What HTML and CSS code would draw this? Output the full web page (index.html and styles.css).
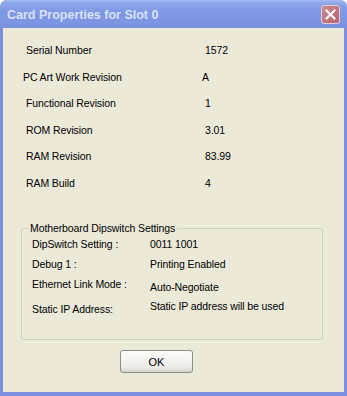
FILE: index.html
```html
<!DOCTYPE html>
<html lang="en">
<head>
    <meta charset="UTF-8">
    <title>Card Properties for Slot 0</title>
    <link rel="stylesheet" href="styles.css">
</head>
<body>
    <div class="window">
        <div class="titlebar">
            <span class="title">Card Properties for Slot 0</span>
            <button class="close" aria-label="Close">
                <svg width="11" height="11" viewBox="0 0 11 11">
                    <path d="M1.5 1.5 L9.5 9.5 M9.5 1.5 L1.5 9.5" stroke="#fff" stroke-width="2" stroke-linecap="square"/>
                </svg>
            </button>
        </div>

        <div class="content">
            <div class="props">
                <div class="prop"><span class="label">Serial Number</span><span class="value">1572</span></div>
                <div class="prop shift"><span class="label">PC Art Work Revision</span><span class="value">A</span></div>
                <div class="prop"><span class="label">Functional Revision</span><span class="value">1</span></div>
                <div class="prop"><span class="label">ROM Revision</span><span class="value">3.01</span></div>
                <div class="prop"><span class="label">RAM Revision</span><span class="value">83.99</span></div>
                <div class="prop"><span class="label">RAM Build</span><span class="value">4</span></div>
            </div>

            <fieldset class="group">
                <legend>Motherboard Dipswitch Settings</legend>
                <div class="setting"><span class="label">DipSwitch Setting :</span><span class="value">0011 1001</span></div>
                <div class="setting"><span class="label">Debug 1 :</span><span class="value">Printing Enabled</span></div>
                <div class="setting"><span class="label">Ethernet Link Mode :</span><span class="value low">Auto-Negotiate</span></div>
                <div class="setting tall"><span class="label low">Static IP Address:</span><span class="value">Static IP address will be used</span></div>
            </fieldset>

            <div class="buttons">
                <button class="ok">OK</button>
            </div>
        </div>
    </div>
</body>
</html>
```

FILE: styles.css
```css
body {
    margin: 0;
    background: #fff;
    font-family: "Liberation Sans", Arial, sans-serif;
    font-size: 10.5px;
    letter-spacing: -0.1px;
    color: #000;
}
.window {
    width: 347px;
    height: 396px;
    box-sizing: border-box;
    display: flex;
    flex-direction: column;
    background: #7d8fe0;
    border-radius: 7px 7px 0 0;
    overflow: hidden;
}
.titlebar {
    height: 28px;
    flex-shrink: 0;
    display: flex;
    align-items: center;
    justify-content: space-between;
    padding: 0 7px 0 7px;
    background: linear-gradient(#a9bdf2 0, #8ea6ea 3px, #7f98e4 12px, #7d95e2 22px, #7a8fdc 28px);
}
.title {
    font-weight: bold;
    font-size: 12.5px;
    letter-spacing: 0;
    color: #d8e3f8;
    padding-top: 2px;
}
.close {
    width: 19px;
    height: 19px;
    padding: 0;
    margin-top: 1px;
    border: 1px solid #e3cfd6;
    border-radius: 3px;
    background: linear-gradient(135deg, #cc8a92, #b6656e);
    display: flex;
    align-items: center;
    justify-content: center;
}
.content {
    flex: 1;
    margin: 0 3px 4px 3px;
    background: #ece9d8;
    display: flex;
    flex-direction: column;
}
.props {
    padding: 9px 0 0 23px;
}
.prop {
    display: flex;
    height: 26.5px;
    align-items: center;
}
.prop .label {
    width: 179px;
}
.prop.shift .label {
    margin-left: -3px;
    width: 179px;
}
.group {
    margin: 26px 21px 0 18px;
    padding: 0 0 0 10px;
    border: 1px solid #d0d0bf;
    border-radius: 3px;
    height: 118px;
    box-sizing: border-box;
}
.group legend {
    padding: 0 2px;
    margin-left: -4px;
    color: #000;
}
.setting {
    display: flex;
    height: 20px;
    align-items: center;
}
.setting.tall {
    height: 24px;
}
.setting .label {
    width: 118px;
}
.low {
    position: relative;
    top: 3px;
}
.buttons {
    padding: 10px 0 0 117px;
}
.ok {
    width: 73px;
    height: 23px;
    font-family: "Liberation Sans", Arial, sans-serif;
    font-size: 11px;
    color: #000;
    background: linear-gradient(#fdfdfb, #ecebe6 80%, #d6d0c5);
    border: 1px solid #8f8f85;
    border-radius: 3px;
    padding: 0;
}
```
